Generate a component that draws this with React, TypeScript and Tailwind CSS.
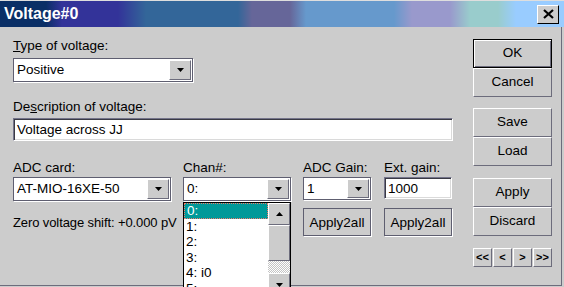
import React from 'react';

const raised = 'bg-[#cccccc] border border-t-white border-l-white border-r-[#6c6c7c] border-b-[#6c6c7c]';
const field = 'bg-white border border-t-[#74748a] border-l-[#74748a] border-r-white border-b-white shadow-[inset_1px_1px_0_#3a3a44,inset_-1px_-1px_0_#dadada]';
const boxed = 'border border-[#5e5e70] shadow-[1px_1px_0_#ffffff]';

function Arrow({ up = false }: { up?: boolean }) {
  return (
    <svg width="7" height="4" viewBox="0 0 7 4">
      <polygon points={up ? '3.5,0 7,4 0,4' : '0,0 7,0 3.5,4'} fill="#000" />
    </svg>
  );
}

function Select({ value, className }: { value: string; className: string }) {
  return (
    <div className={`${boxed} bg-white flex items-stretch p-[1px] ${className}`}>
      <div className="flex-1 flex items-center pl-[2px] leading-none">{value}</div>
      <div className={`${raised} w-[22px] flex items-center justify-center`}>
        <Arrow />
      </div>
    </div>
  );
}

function Button({ label, isDefault = false }: { label: string; isDefault?: boolean }) {
  const look = isDefault
    ? 'bg-[#cccccc] border border-black shadow-[inset_1px_1px_0_#ffffff,inset_-1px_-1px_0_#6c6c7c]'
    : raised;
  return <div className={`${look} h-[29px] w-[79px] flex items-center justify-center`}>{label}</div>;
}

function Apply2all() {
  return (
    <div className={`${boxed} bg-[#cccccc] h-[28px] w-[68px] flex items-center justify-center shadow-[1px_1px_0_#ffffff,inset_1px_1px_0_#6c6c7c,inset_-1px_-1px_0_#6c6c7c]`}>
      Apply2all
    </div>
  );
}

const channels = ['0:', '1:', '2:', '3:', '4: i0', '5:'];

export default function App() {
  return (
    <div className="w-[564px] h-[287px] overflow-hidden bg-[#cccccc] border-t border-[#dedede] text-[13.5px] text-black font-['Liberation_Sans',Arial,sans-serif]">
      {/* title bar */}
      <div className="h-[26px] flex items-center justify-between pl-[4px] pr-[5px] bg-[linear-gradient(90deg,#0a2f66_0px,#0a2f66_46px,#333399_62px,#333399_118px,#336699_146px,#336699_238px,#666699_252px,#666699_290px,#6699cc_306px,#6699cc_394px,#9999cc_412px,#9999cc_450px,#99cccc_470px,#99cccc_498px,#99ccff_516px,#99ccff_564px)]">
        <span className="text-white font-bold text-[16px] leading-none">Voltage#0</span>
        <div className={`${raised} w-[22px] h-[19px] flex items-center justify-center border-r-black border-b-black`}>
          <svg width="11" height="10" viewBox="0 0 11 10">
            <path d="M1 1 L10 9 M10 1 L1 9" stroke="#000" strokeWidth="2.2" />
          </svg>
        </div>
      </div>

      {/* body */}
      <div className="w-[562px] h-[259px] flex border-r border-b border-[#6c6c7c]">
        <div className="w-[473px] pl-[13px] pt-[11px] leading-[15px]">
          <div className="h-[15px]">
            <span className="underline">T</span>ype of voltage:
          </div>
          <Select value="Positive" className="mt-[5px] h-[24px] w-[180px]" />

          <div className="mt-[17px] h-[15px]">
            De<span className="underline">s</span>cription of voltage:
          </div>
          <div className={`${field} mt-[4px] h-[23px] w-[440px] flex items-center pl-[3px]`}>Voltage across JJ</div>

          <div className="mt-[19px] flex">
            <div className="w-[158px]">
              <div className="h-[15px]">ADC card:</div>
              <Select value="AT-MIO-16XE-50" className="mt-[2px] h-[24px] w-[158px]" />
              <div className="mt-[14px] whitespace-nowrap text-[13px] tracking-[-0.1px]">Zero voltage shift: +0.000 pV</div>
            </div>

            <div className="ml-[12px] w-[108px]">
              <div className="h-[15px]">Chan#:</div>
              <div className="relative mt-[2px]">
                <Select value="0:" className="h-[24px] w-[108px]" />
                <div className="absolute left-0 top-[25px] w-[108px] h-[90px] bg-white border border-black flex">
                  <div className="flex-1">
                    {channels.map((c, i) => (
                      <div
                        key={c}
                        className={`h-[15.5px] flex items-center pl-[2px] ${
                          i === 0 ? 'bg-[#009999] text-white border border-dotted border-[#f07a6a]' : ''
                        }`}
                      >
                        {c}
                      </div>
                    ))}
                  </div>
                  <div className="w-[22px] flex flex-col">
                    <div className={`${raised} h-[22px] flex items-center justify-center`}>
                      <Arrow up />
                    </div>
                    <div className={`${raised} h-[36px]`} />
                    <div className="h-[12px] bg-[repeating-conic-gradient(#ffffff_0_25%,#c4c4c4_0_50%)] bg-[length:2px_2px]" />
                    <div className={`${raised} flex-1 flex items-start justify-center pt-[9px]`}>
                      <Arrow />
                    </div>
                  </div>
                </div>
              </div>
            </div>

            <div className="ml-[12px] w-[68px]">
              <div className="h-[15px]">ADC Gain:</div>
              <Select value="1" className="mt-[2px] h-[23px] w-[68px]" />
              <div className="mt-[8px]">
                <Apply2all />
              </div>
            </div>

            <div className="ml-[13px] w-[68px]">
              <div className="h-[15px]">Ext. gain:</div>
              <div className={`${field} mt-[2px] h-[22px] w-[68px] flex items-center pl-[3px]`}>1000</div>
              <div className="mt-[9px]">
                <Apply2all />
              </div>
            </div>
          </div>
        </div>

        {/* right buttons */}
        <div className="pt-[12px] w-[79px]">
          <Button label="OK" isDefault />
          <Button label="Cancel" />
          <div className="mt-[11px]">
            <Button label="Save" />
            <Button label="Load" />
          </div>
          <div className="mt-[12px]">
            <Button label="Apply" />
            <Button label="Discard" />
          </div>
          <div className="mt-[12px] flex gap-[1px]">
            {['<<', '<', '>', '>>'].map((n) => (
              <div key={n} className={`${raised} w-[19px] h-[19px] flex items-center justify-center text-[11px] font-bold leading-none`}>
                {n}
              </div>
            ))}
          </div>
        </div>
      </div>
    </div>
  );
}
